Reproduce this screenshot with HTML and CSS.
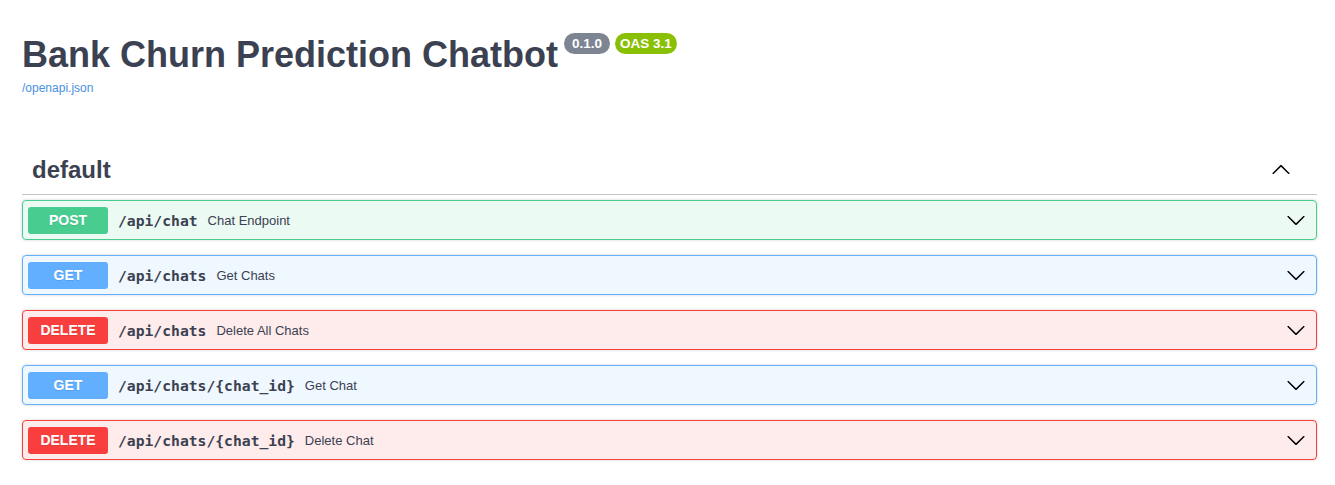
FILE: index.html
```html
<!DOCTYPE html>
<html>
<head>
<meta charset="utf-8">
<link rel="stylesheet" href="styles.css">
</head>
<body>
<div class="wrapper">
  <div class="info">
    <h1 class="title">Bank Churn Prediction Chatbot <span class="badges"><span class="badge version">0.1.0</span><span class="badge oas">OAS 3.1</span></span></h1>
    <a class="link" href="#">/openapi.json</a>
  </div>
  <div class="tag">
    <h3 class="tag-title">default</h3>
    <svg class="arrow" width="20" height="20" viewBox="0 0 20 20"><path d="M2.582 13.891c-.272.268-.709.268-.979 0s-.271-.701 0-.969l7.908-7.83c.27-.268.707-.268.979 0l7.908 7.83c.27.268.27.701 0 .969-.271.268-.709.268-.979 0L10 6.75l-7.418 7.141z"/></svg>
  </div>
  <div class="ops">
    <div class="op post"><span class="method">POST</span><span class="path">/api/chat</span><span class="desc">Chat Endpoint</span><svg class="chev" width="20" height="20" viewBox="0 0 20 20"><path d="M17.418 6.109c.272-.268.709-.268.979 0s.271.701 0 .969l-7.908 7.83c-.27.268-.707.268-.979 0l-7.908-7.83c-.27-.268-.27-.701 0-.969.271-.268.709-.268.979 0L10 13.25l7.418-7.141z"/></svg></div>
    <div class="op get"><span class="method">GET</span><span class="path">/api/chats</span><span class="desc">Get Chats</span><svg class="chev" width="20" height="20" viewBox="0 0 20 20"><path d="M17.418 6.109c.272-.268.709-.268.979 0s.271.701 0 .969l-7.908 7.83c-.27.268-.707.268-.979 0l-7.908-7.83c-.27-.268-.27-.701 0-.969.271-.268.709-.268.979 0L10 13.25l7.418-7.141z"/></svg></div>
    <div class="op delete"><span class="method">DELETE</span><span class="path">/api/chats</span><span class="desc">Delete All Chats</span><svg class="chev" width="20" height="20" viewBox="0 0 20 20"><path d="M17.418 6.109c.272-.268.709-.268.979 0s.271.701 0 .969l-7.908 7.83c-.27.268-.707.268-.979 0l-7.908-7.83c-.27-.268-.27-.701 0-.969.271-.268.709-.268.979 0L10 13.25l7.418-7.141z"/></svg></div>
    <div class="op get"><span class="method">GET</span><span class="path">/api/chats/{chat_id}</span><span class="desc">Get Chat</span><svg class="chev" width="20" height="20" viewBox="0 0 20 20"><path d="M17.418 6.109c.272-.268.709-.268.979 0s.271.701 0 .969l-7.908 7.83c-.27.268-.707.268-.979 0l-7.908-7.83c-.27-.268-.27-.701 0-.969.271-.268.709-.268.979 0L10 13.25l7.418-7.141z"/></svg></div>
    <div class="op delete"><span class="method">DELETE</span><span class="path">/api/chats/{chat_id}</span><span class="desc">Delete Chat</span><svg class="chev" width="20" height="20" viewBox="0 0 20 20"><path d="M17.418 6.109c.272-.268.709-.268.979 0s.271.701 0 .969l-7.908 7.83c-.27.268-.707.268-.979 0l-7.908-7.83c-.27-.268-.27-.701 0-.969.271-.268.709-.268.979 0L10 13.25l7.418-7.141z"/></svg></div>
  </div>
</div>
</body>
</html>
```

FILE: styles.css
```css
* { box-sizing: border-box; }
body {
  margin: 0;
  background: #fff;
  font-family: "Liberation Sans", Arial, sans-serif;
  color: #3b4151;
}
.wrapper {
  padding: 0 18px 0 22px;
}
.info {
  padding-top: 34px;
}
.title {
  margin: 0;
  font-size: 36px;
  font-weight: 700;
  line-height: 42px;
  color: #3b4151;
  display: flex;
  align-items: flex-start;
  white-space: pre;
}
.badges {
  display: inline-flex;
  gap: 5px;
  margin-top: -1px;
  margin-left: -4px;
}
.badge {
  font-size: 13.5px;
  font-weight: 700;
  line-height: 21px;
  height: 21px;
  border-radius: 11px;
  color: #fff;
}
.version { background: #7d8492; padding: 0 8px; }
.oas { background: #89bf04; padding: 0 5px; }
.link {
  display: block;
  margin-top: 5px;
  font-size: 12px;
  color: #4990e2;
  text-decoration: none;
}
.tag {
  margin-top: 52px;
  display: flex;
  align-items: center;
  justify-content: space-between;
  height: 48px;
  padding: 0 20px 2px 10px;
  border-bottom: 1px solid rgba(59,65,81,.3);
}
.tag-title {
  margin: 0;
  font-size: 24px;
  font-weight: 700;
  color: #3b4151;
}
.arrow { fill: #000; margin-right: 6px; }
.ops {
  padding-top: 5px;
}
.op {
  display: flex;
  align-items: center;
  height: 40px;
  margin-bottom: 15px;
  padding: 0 10px 0 5px;
  border: 1px solid;
  border-radius: 4px;
  box-shadow: 0 0 3px rgba(0,0,0,.19);
}
.method {
  width: 80px;
  height: 27px;
  line-height: 27px;
  text-align: center;
  border-radius: 3px;
  color: #fff;
  font-size: 14px;
  font-weight: 700;
  text-shadow: 0 1px 0 rgba(0,0,0,.1);
}
.path {
  padding: 0 10px;
  font-family: "DejaVu Sans Mono", monospace;
  font-size: 14.7px;
  font-weight: 700;
  color: #3b4151;
}
.desc {
  font-size: 13px;
  color: #3b4151;
  flex: 1;
}
.chev { fill: #000; }
.post { border-color: #49cc90; background: rgba(73,204,144,.1); }
.post .method { background: #49cc90; }
.get { border-color: #61affe; background: rgba(97,175,254,.1); }
.get .method { background: #61affe; }
.delete { border-color: #f93e3e; background: rgba(249,62,62,.1); }
.delete .method { background: #f93e3e; }
```
